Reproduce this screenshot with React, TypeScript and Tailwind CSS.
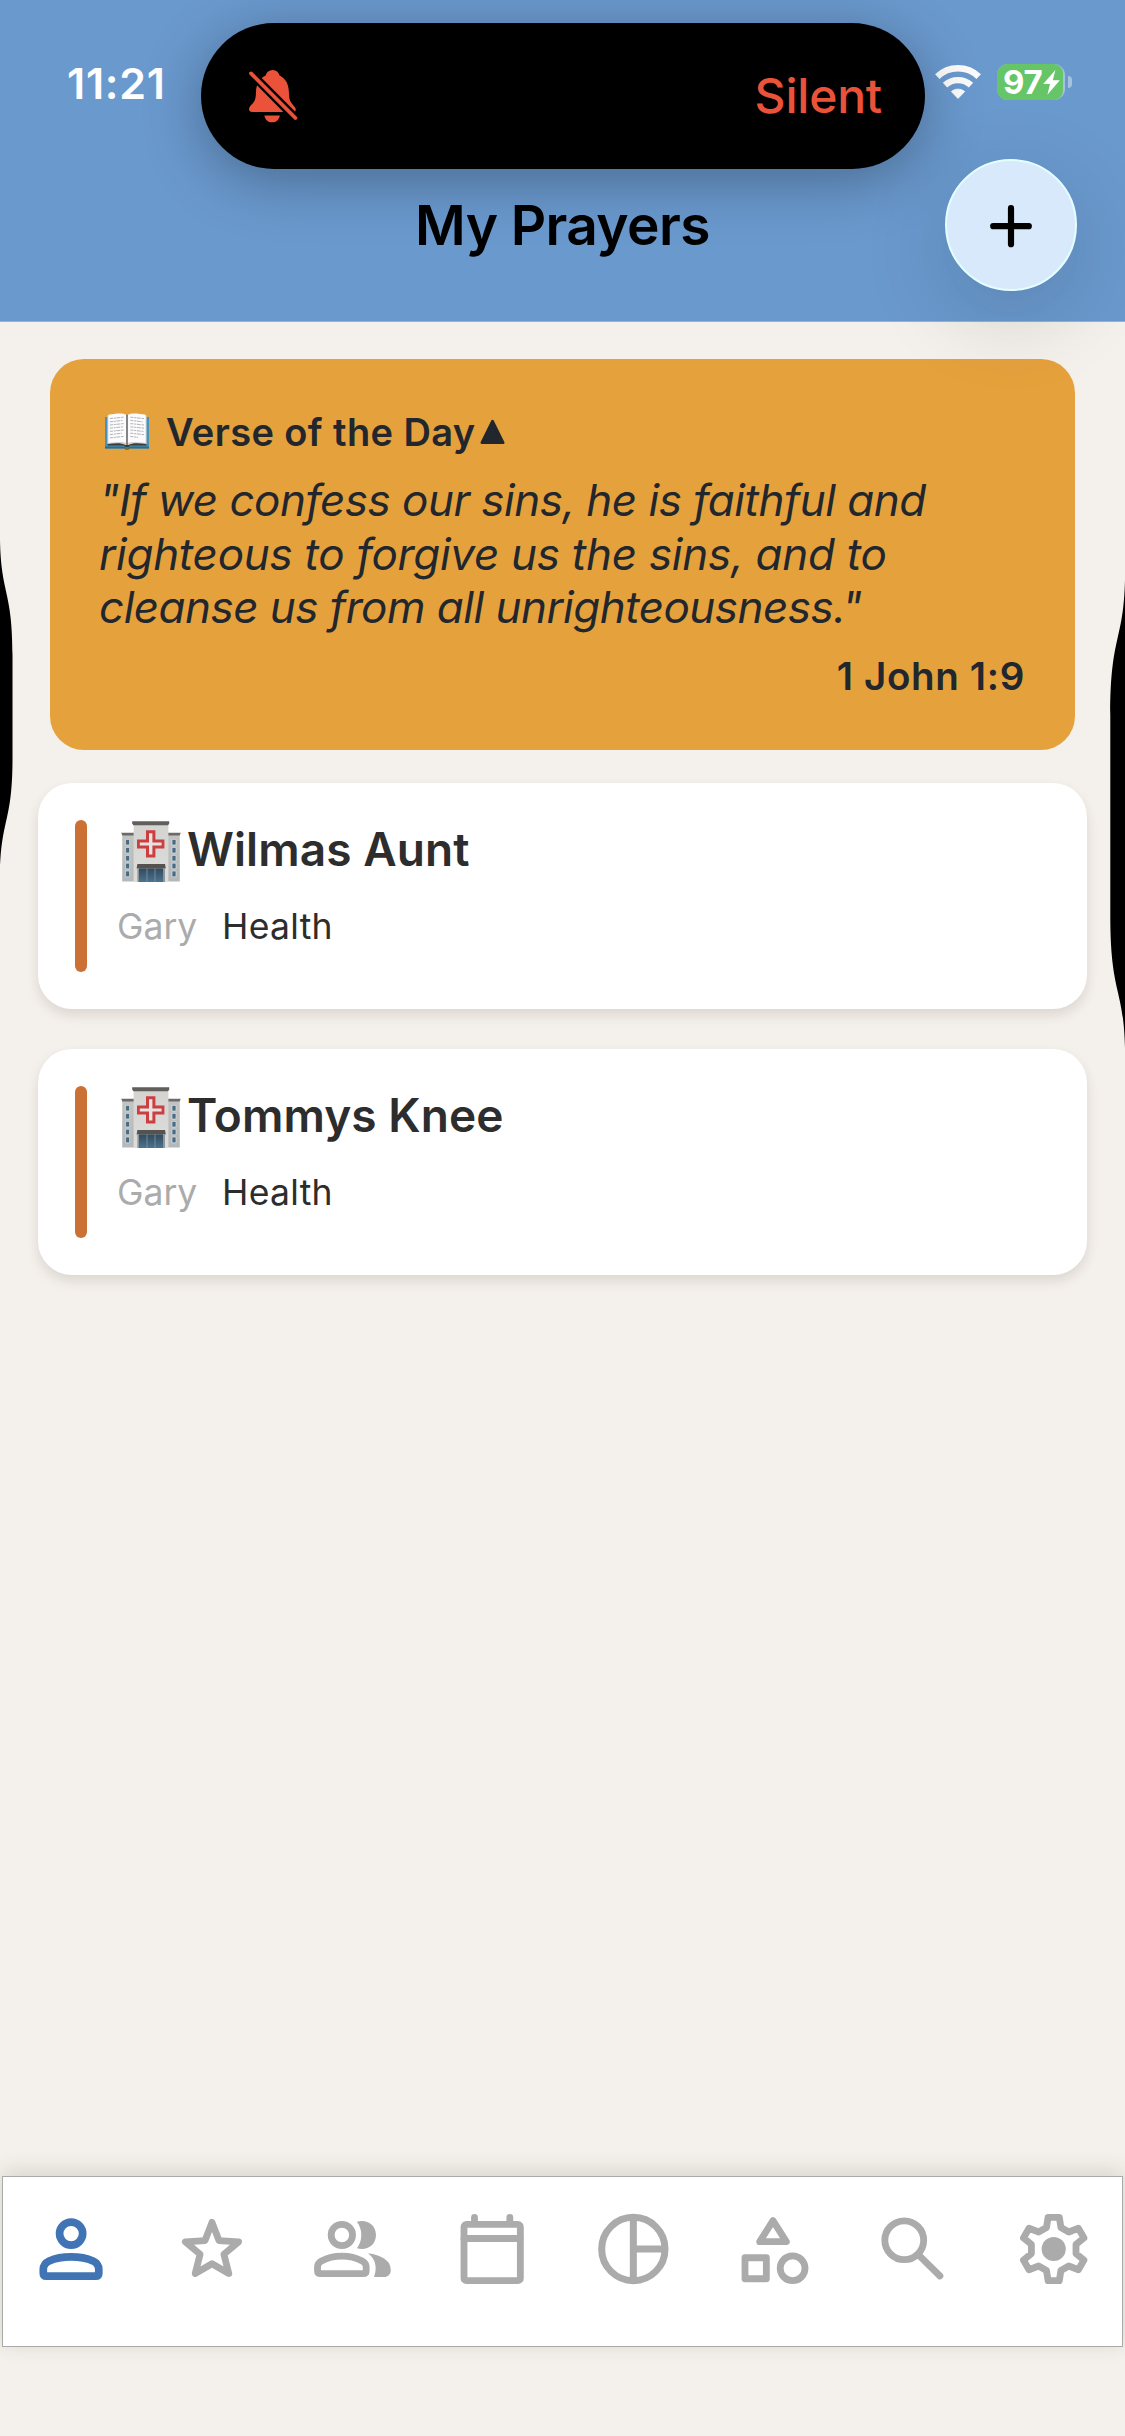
import type { ReactNode } from 'react';

function SilentBell() {
  return (
    <svg className="h-[53px] w-[49px]" viewBox="0 0 49 53" fill="none">
      <path
        fill="#ea5339"
        d="M23.6 0C27.2 0 29.6 2.2 30.6 5.6C36.6 8.6 39.6 14 39.9 22C40.1 28.5 40.6 31 43.4 34.2C45.6 36.6 46.8 38 46.8 39.6C46.8 41.2 45.6 42 44 42H3.2C1.2 42 0 40.8 0 39C0 37.4 1 36.2 3 34.2C6.2 31 6.8 28.5 7 22C7.3 14 10.4 8.6 16.6 5.6C17.6 2.2 20 0 23.6 0Z"
      />
      <path fill="#ea5339" d="M15.4 45.4H30.8C30.2 49.6 27.4 52.3 23.1 52.3S16 49.6 15.4 45.4Z" />
      <path stroke="#000" strokeWidth="8.6" d="M-1 0.2L46.6 48.2" />
      <path stroke="#ea5339" strokeWidth="3.8" strokeLinecap="round" d="M2 3.4L46.4 48" />
    </svg>
  );
}

function Wifi() {
  return (
    <svg className="h-[34px] w-[46px]" viewBox="0 0 46 34" fill="none">
      <path stroke="#fbfbfb" strokeWidth="6.4" d="M2.3 11.6C13.8 0.4 32.2 0.4 43.7 11.6" />
      <path stroke="#fbfbfb" strokeWidth="6.4" d="M10 20.2C17.4 13.4 28.6 13.4 36 20.2" />
      <path fill="#fbfbfb" stroke="#fbfbfb" strokeWidth="1" strokeLinejoin="round" d="M23 33.4L16.4 26.6C20.2 23.4 25.8 23.4 29.6 26.6Z" />
    </svg>
  );
}

function Battery() {
  return (
    <div className="flex items-center gap-[3px]">
      <div className="flex h-9 w-[68px] rounded-[11px] bg-white/40">
        <div className="flex h-9 w-[66px] items-center rounded-l-[11px] rounded-r-[9px] bg-[#66c567] pl-1.5">
          <span className="text-[33px] leading-[42px] font-bold tracking-[-0.3px] text-white">97</span>
          <svg className="ml-px h-[25px] w-[17px] shrink-0" viewBox="0 0 17 24" preserveAspectRatio="none">
            <path fill="#fff" d="M12.4 0L0.2 13.4H7L4.4 23.8L16.8 9.8H9.8Z" />
          </svg>
        </div>
      </div>
      <div className="h-3 w-1 rounded-r-full bg-white/40" />
    </div>
  );
}

function OpenBook() {
  return (
    <svg className="h-[37px] w-[46px]" viewBox="0 0 46 37" fill="none">
      <path fill="#4593b8" d="M1 4H45V35.4H26Q23 37.6 20 35.4H1Z" />
      <path fill="#2b6c92" d="M1 33.4H45V35.6H26Q23 37.6 20 35.6H1Z" />
      <path fill="#d5d2d4" d="M3.4 2.4H42.6V32H3.4Z" />
      <path fill="#fbfafc" d="M4.4 1.8C11 0.6 18.5 -0.4 22.2 1.8V30C18 28.4 11 29.2 4.4 30Z" />
      <path fill="#fbfafc" d="M41.6 1.8C35 0.6 27.5 -0.4 23.8 1.8V30C28 28.4 35 29.2 41.6 30Z" />
      <path fill="#3f3c35" d="M3.4 31C11 30 18 29.6 21.4 32H24.6C28 29.6 35 30 42.6 31V32.6H26L23 35.4L20 32.6H3.4Z" />
      <path stroke="#6f6c70" strokeWidth="1.6" d="M23 1.8V32" />
      <path
        stroke="#b4b2b8"
        strokeWidth="1"
        strokeDasharray="3 0.8 2 0.6 4 0.8"
        d="M6 5.6L19.6 4.2M6 8.8L18.6 7.4M6 12L19.6 10.6M6 15.2L19 13.8M6 18.4L19.6 17M6 21.6L18 20.2M6 24.8L19.6 23.4M26.4 4.2L40 5.6M26.4 7.4L38.6 8.8M26.4 10.6L40 12M26.4 13.8L40 15.2M26.4 17L39.4 18.4M26.4 20.2L40 21.6M26.4 23.4L34 24.4"
      />
      <path fill="#8a6a20" d="M21 34H25V36.6H21Z" />
    </svg>
  );
}

function Hospital() {
  return (
    <svg className="h-[61px] w-[60px] shrink-0" viewBox="0 0 60 61" fill="none">
      <defs>
        <linearGradient id="tower" x1="0" y1="0" x2="0" y2="1">
          <stop offset="0" stopColor="#d3d3d0" />
          <stop offset="1" stopColor="#dddddb" />
        </linearGradient>
        <linearGradient id="wing" x1="0" y1="0" x2="0" y2="1">
          <stop offset="0" stopColor="#c3c4bf" />
          <stop offset="1" stopColor="#b3b8ba" />
        </linearGradient>
        <linearGradient id="glass" x1="0" y1="0" x2="0" y2="1">
          <stop offset="0" stopColor="#34495a" />
          <stop offset="1" stopColor="#4a7391" />
        </linearGradient>
      </defs>
      <path fill="url(#wing)" d="M1.2 13H13V60.6H1.2ZM47 13H58.8V60.6H47Z" />
      <path fill="#6d6b69" d="M0.2 11.8H13V14.6H1.4ZM47 11.8H59.8L58.6 14.6H47Z" />
      <path fill="url(#tower)" d="M12.6 3H47.4V61H12.6Z" />
      <path fill="#615e5c" d="M11.2 0.2H48.2V2.4L47 4.2H12.4L11.2 2.4Z" />
      <path fill="#cb3f41" d="M25 9.2H34.4V18.6H43.4V27.4H34.4V36.4H25V27.4H16V18.6H25Z" />
      <path fill="#e6e2e0" d="M28 12.2H31.4V21.4H40.6V24.6H31.4V33.6H28V24.6H18.8V21.4H28Z" />
      <path fill="#555250" d="M16.4 43H44L44.8 47.4H15.6Z" />
      <path fill="#8f9596" d="M16.4 47.4H44V61H16.4Z" />
      <path fill="url(#glass)" d="M18 47.4H42V61H18Z" />
      <path stroke="#7d98aa" strokeWidth="0.8" d="M26 47.4V61M34 47.4V61" />
      <path
        fill="#476b86"
        stroke="#dfe3e4"
        strokeWidth="0.7"
        d="M4.6 18.4H8.6V24H4.6ZM4.6 26.4H8.6V32H4.6ZM4.6 34.4H8.6V40H4.6ZM4.6 42.2H8.6V47.8H4.6ZM4.6 50H8.6V55.8H4.6ZM51 18.4H55V24H51ZM51 26.4H55V32H51ZM51 34.4H55V40H51ZM51 42.2H55V47.8H51ZM51 50H55V55.8H51Z"
      />
    </svg>
  );
}

function TabIcon({ children, width = 2 }: { children: ReactNode; width?: number }) {
  return (
    <svg
      className="h-[84px] w-[84px]"
      viewBox="0 0 24 24"
      fill="none"
      stroke="currentColor"
      strokeWidth={width}
      strokeLinecap="round"
      strokeLinejoin="round"
    >
      {children}
    </svg>
  );
}

/** Outline of a six-toothed cog centred on (12.2, 12). */
function gearOutline() {
  const points: string[] = [];
  for (let tooth = 0; tooth < 6; tooth++) {
    for (const [radius, offset] of [[9.2, -10], [9.2, 10], [6.5, 18.5], [6.5, 41.5]]) {
      const angle = ((tooth * 60 + offset) * Math.PI) / 180;
      points.push(`${(12.2 + radius * Math.sin(angle)).toFixed(2)} ${(12 - radius * Math.cos(angle)).toFixed(2)}`);
    }
  }
  return `M${points.join('L')}Z`;
}

const tabs: { name: string; icon: ReactNode }[] = [
  {
    name: 'My prayers',
    icon: (
      <TabIcon width={2.2}>
        <circle cx="11.75" cy="7.6" r="3.3" />
        <path d="M3.8 17.8C3.8 16.7 4.5 15.9 5.5 15.4C7.3 14.6 9.4 14.25 11.75 14.25S16.2 14.6 18 15.4C19 15.9 19.65 16.7 19.65 17.8V18.9Q19.65 19.75 18.8 19.75H4.65Q3.8 19.75 3.8 18.9Z" />
      </TabIcon>
    ),
  },
  {
    name: 'Favourites',
    icon: (
      <TabIcon width={1.95}>
        <path d="M12 4.4L14 9.6L19.6 9.95L15.4 13.5L16.8 19L12 16.2L7.2 19L8.6 13.5L4.4 9.95L10 9.6Z" />
      </TabIcon>
    ),
  },
  {
    name: 'Groups',
    icon: (
      <TabIcon width={1.95}>
        <circle cx="9.1" cy="8" r="3.05" />
        <path d="M2.15 17.1C2.15 16.4 2.6 15.8 3.3 15.4C5 14.5 7 14.05 9.1 14.05S13.2 14.5 14.9 15.4C15.6 15.8 16.05 16.4 16.05 17.1V18.2Q16.05 19.05 15.2 19.05H3Q2.15 19.05 2.15 18.2Z" />
        <path
          fill="currentColor"
          stroke="none"
          d="M13.4 4.2C16.2 3.4 18.85 5 18.85 8S16.2 12.6 13.4 11.8C15.1 9.5 15.1 6.5 13.4 4.2ZM16.6 13.2C20.2 13.7 23.05 15.2 23.05 17.7V18.2C23.05 19.2 22.2 20 21.2 20H18.3C19.1 17.8 19.1 15.2 16.6 13.2Z"
        />
      </TabIcon>
    ),
  },
  {
    name: 'Calendar',
    icon: (
      <TabIcon width={1.95}>
        <rect x="4" y="4.95" width="16.1" height="16.1" rx="0.7" />
        <path d="M4 9H20M7 4.5V3M17.1 4.5V3" />
      </TabIcon>
    ),
  },
  {
    name: 'Statistics',
    icon: (
      <TabIcon width={2}>
        <circle cx="12.1" cy="12" r="9.05" />
        <path d="M12.1 3V21M12.1 12H21" />
      </TabIcon>
    ),
  },
  {
    name: 'Categories',
    icon: (
      <TabIcon width={1.95}>
        <path d="M12 3.9L15.8 9.9H8.2Z" />
        <rect x="4" y="14.5" width="6.1" height="6" />
        <circle cx="17.6" cy="17.5" r="3.55" />
      </TabIcon>
    ),
  },
  {
    name: 'Search',
    icon: (
      <TabIcon width={1.95}>
        <circle cx="9.5" cy="9.5" r="5.55" />
        <path d="M13.8 13.9L19.7 19.7" />
      </TabIcon>
    ),
  },
  {
    name: 'Settings',
    icon: (
      <TabIcon width={1.95}>
        <path d={gearOutline()} />
        <circle cx="12.2" cy="12" r="3.45" fill="currentColor" stroke="none" />
      </TabIcon>
    ),
  },
];

function PrayerCard({ title, person, category }: { title: string; person: string; category: string }) {
  return (
    <article className="flex h-[226px] rounded-[34px] bg-white p-[37px] shadow-[0_6px_12px_rgba(60,50,40,0.13)]">
      <div className="h-[152px] w-3 rounded-full bg-[#cc7135]" />
      <div className="ml-[30px]">
        <div className="flex h-[58px] items-center">
          <span className="mt-1 mr-[6px] ml-1 flex">
            <Hospital />
          </span>
          <h2 className="text-[46px] leading-[58px] font-semibold tracking-[0.08px] text-[#2d2d2d]">{title}</h2>
        </div>
        <div className="mt-[27px] flex h-11 items-center text-[35.5px] leading-[44px]">
          <span className="w-[105px] text-[#ababab]">{person}</span>
          <span className="tracking-[0.3px] text-[#2d2d2d]">{category}</span>
        </div>
      </div>
    </article>
  );
}

export default function App() {
  return (
    <div className="relative flex h-[2436px] w-[1125px] flex-col overflow-hidden bg-[#f4f0eb] font-['Inter',sans-serif] whitespace-nowrap">
      <header className="relative z-10 h-[322px] border-b border-[#a9aeb3] bg-[#6a99ce]">
        <div className="flex h-[159px] items-center justify-between pt-[7px] pr-[53px] pl-[67px]">
          <time className="text-[43px] leading-[52px] font-semibold tracking-[0.7px] text-white">11:21</time>
          <div className="flex items-center gap-4 pb-0.5">
            <Wifi />
            <Battery />
          </div>
        </div>
        <div className="grid h-[132px] grid-cols-[1fr_auto_1fr] items-center">
          <h1 className="col-start-2 text-[55px] leading-[64px] font-semibold tracking-[-0.6px] text-black">My Prayers</h1>
          <button
            aria-label="Add prayer"
            className="mr-12 flex size-[132px] items-center justify-center justify-self-end rounded-full border-2 border-[#e4fdff] bg-[#d7e9fb] pt-px shadow-[0_24px_84px_rgba(30,40,50,0.18)]"
          >
            <svg className="size-[44px]" viewBox="0 0 44 44" fill="none" stroke="#000" strokeWidth="6.2" strokeLinecap="round">
              <path d="M22 4.2V40.2M4.2 22.2H39.8" />
            </svg>
          </button>
        </div>
        <div className="absolute top-[23px] left-[201px] flex h-[146px] w-[724px] items-center justify-between rounded-full bg-black pr-[43px] pl-12 shadow-[0_12px_60px_rgba(0,0,0,0.3)]">
          <SilentBell />
          <span className="text-[48px] leading-[60px] font-medium tracking-[-0.2px] text-[#ea5339]">Silent</span>
        </div>
      </header>

      <main className="flex-1 px-[38px] pt-[36.5px]">
        <section className="mx-3 h-[391px] rounded-[34px] bg-[#e5a13c] pt-12 pr-[50px] pl-[49px] text-[#22272d]">
          <div className="flex h-[50px] items-center pl-[5px]">
            <OpenBook />
            <h2 className="ml-4 text-[38px] leading-[50px] font-semibold tracking-[0.4px]">Verse of the Day</h2>
            <svg className="ml-1 h-[26px] w-[25px]" viewBox="0 0 25 26">
              <path
                fill="currentColor"
                stroke="currentColor"
                strokeWidth="3"
                strokeLinejoin="round"
                d="M12.5 2.4L23 23.6H2Z"
              />
            </svg>
          </div>
          <blockquote className="mt-[17.5px] text-[44px] leading-[53.6px] italic">
            <p className="tracking-[-0.52px]">"If we confess our sins, he is faithful and</p>
            <p className="tracking-[-0.27px]">righteous to forgive us the sins, and to</p>
            <p className="tracking-[-0.53px]">cleanse us from all unrighteousness."</p>
          </blockquote>
          <p className="mt-[18px] text-right text-[38.5px] leading-[46px] font-semibold tracking-[0.65px]">1 John 1:9</p>
        </section>

        <div className="mt-[33.5px] flex flex-col gap-10">
          <PrayerCard title="Wilmas Aunt" person="Gary" category="Health" />
          <PrayerCard title="Tommys Knee" person="Gary" category="Health" />
        </div>
      </main>

      <nav className="mx-0.5 mb-[89px] grid h-[171px] grid-cols-8 justify-items-center bg-white pt-[31px] text-[#ababab] shadow-[0_-4px_20px_rgba(50,60,40,0.16)] outline-1 -outline-offset-1 outline-[#a9a9a9]">
        {tabs.map((tab, index) => (
          <button key={tab.name} aria-label={tab.name} className={index === 0 ? 'h-[84px] text-[#4174b4]' : 'h-[84px]'}>
            {tab.icon}
          </button>
        ))}
      </nav>

      <svg className="absolute top-[540px] left-0 h-[334px] w-[13px]" viewBox="0 0 13 334">
        <path d="M0 0C1 55 12.5 50 12.5 115V218C12.5 283 1 278 0 334Z" />
      </svg>
      <svg className="absolute top-[580px] right-0 h-[468px] w-[15px]" viewBox="0 0 15 468">
        <path d="M15 0C13.5 62 0.3 55 0.3 135V335C0.3 415 13.5 406 15 468Z" />
      </svg>
    </div>
  );
}
